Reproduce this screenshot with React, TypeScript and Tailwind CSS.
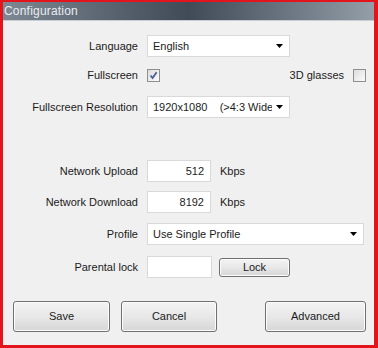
import React from "react";

const font = { fontFamily: '"Liberation Sans", Arial, sans-serif' };

function Arrow() {
  return (
    <svg width="7" height="4" viewBox="0 0 7 4" className="shrink-0">
      <path d="M0 0 H7 L3.5 4 Z" fill="#000" />
    </svg>
  );
}

function Combo({ w, children }: { w: string; children: React.ReactNode }) {
  return (
    <div className={`${w} h-[22px] bg-white border border-[#d9d9d9] flex items-center pl-[5px] pr-[6px]`}>
      <div className="flex-1 whitespace-pre overflow-hidden mr-[4px]">{children}</div>
      <Arrow />
    </div>
  );
}

function Check({ checked }: { checked?: boolean }) {
  return (
    <div className="w-[13px] h-[13px] border border-[#8e8f8f] bg-gradient-to-br from-[#dcdcdc] to-[#fbfbfb] flex items-center justify-center">
      {checked && (
        <svg width="9" height="9" viewBox="0 0 9 9">
          <path d="M1.5 4.5 L3.6 7 L7.6 1.2" stroke="#4a5f97" strokeWidth="1.8" fill="none" />
        </svg>
      )}
    </div>
  );
}

function Btn({ w, h, children }: { w: string; h: string; children: React.ReactNode }) {
  return (
    <div
      className={`${w} ${h} border border-[#707070] rounded-[3px] bg-gradient-to-b from-[#f3f3f3] via-[#e8e8e8] to-[#d6d6d6] flex items-center justify-center shadow-[inset_0_0_0_1px_#fcfcfc]`}
    >
      {children}
    </div>
  );
}

function Label({ children }: { children: React.ReactNode }) {
  return <div className="w-[135px] text-right shrink-0 mr-[9px]">{children}</div>;
}

export default function App() {
  return (
    <div
      className="w-[378px] h-[348px] bg-[#e3141c] pt-[2px] pl-[3px] pr-[4px] pb-[3px] flex flex-col text-[11px] text-[#1b1b1b]"
      style={font}
    >
      <div className="h-[18px] shrink-0 bg-gradient-to-r from-[#7e8893] via-[#414b57] to-[#939ea9] flex items-center pl-[1px]">
        <span className="text-[12px] text-[#e9ecf0] tracking-[0.2px]">Configuration</span>
      </div>
      <div className="h-[1px] shrink-0 bg-[#c9ced4]" />
      <div className="flex-1 bg-[#f0f0f0] flex flex-col border-r border-[#fafafa]">
        <div className="mt-[14px] h-[22px] flex items-center">
          <Label>Language</Label>
          <Combo w="w-[143px]">English</Combo>
        </div>
        <div className="mt-[7px] h-[22px] flex items-center">
          <Label>Fullscreen</Label>
          <Check checked />
          <div className="flex-1 text-right mr-[9px]">3D glasses</div>
          <div className="mr-[7px]">
            <Check />
          </div>
        </div>
        <div className="mt-[10px] h-[22px] flex items-center">
          <Label>Fullscreen Resolution</Label>
          <Combo w="w-[143px]">{"1920x1080    (>4:3 Wide"}</Combo>
        </div>
        <div className="mt-[42px] h-[22px] flex items-center">
          <Label>Network Upload</Label>
          <div className="w-[64px] h-[22px] bg-white border border-[#d9d9d9] flex items-center justify-end pr-[6px]">512</div>
          <div className="ml-[9px]">Kbps</div>
        </div>
        <div className="mt-[9px] h-[22px] flex items-center">
          <Label>Network Download</Label>
          <div className="w-[64px] h-[22px] bg-white border border-[#d9d9d9] flex items-center justify-end pr-[6px]">8192</div>
          <div className="ml-[9px]">Kbps</div>
        </div>
        <div className="mt-[10px] h-[22px] flex items-center">
          <Label>Profile</Label>
          <Combo w="w-[217px]">Use Single Profile</Combo>
        </div>
        <div className="mt-[11px] h-[22px] flex items-center">
          <Label>Parental lock</Label>
          <div className="w-[65px] h-[22px] bg-white border border-[#d9d9d9]" />
          <div className="ml-[7px]">
            <Btn w="w-[71px]" h="h-[19px]">Lock</Btn>
          </div>
        </div>
        <div className="mt-[23px] flex items-center pl-[10px]">
          <Btn w="w-[97px]" h="h-[31px]">Save</Btn>
          <div className="ml-[11px]">
            <Btn w="w-[96px]" h="h-[31px]">Cancel</Btn>
          </div>
          <div className="ml-[48px]">
            <Btn w="w-[101px]" h="h-[31px]">Advanced</Btn>
          </div>
        </div>
      </div>
    </div>
  );
}
